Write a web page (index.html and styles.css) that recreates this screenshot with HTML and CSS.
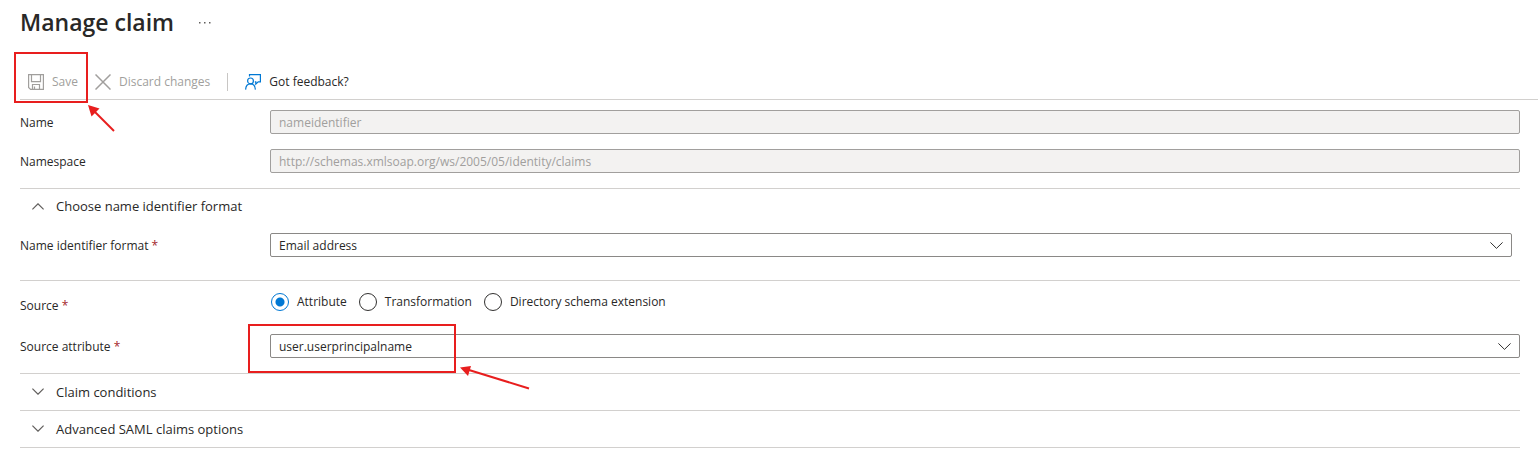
FILE: index.html
```html
<!DOCTYPE html>
<html lang="en">
<head>
    <meta charset="UTF-8">
    <meta name="viewport" content="width=device-width, initial-scale=1.0">
    <title>Manage claim</title>
    <link rel="stylesheet" href="styles.css">
</head>
<body>
    <header class="header">
        <h1>Manage claim</h1>
        <button type="button" class="more" aria-label="More actions">
            <svg width="14" height="4" viewBox="0 0 14 4" fill="#605e5c"><rect x="0" y="2" width="1.5" height="1.5"/><rect x="5" y="2" width="1.5" height="1.5"/><rect x="10" y="2" width="1.5" height="1.5"/></svg>
        </button>
    </header>

    <div class="toolbar">
        <div class="marked">
            <button type="button" class="command" disabled>
                <svg width="16" height="16" viewBox="0 0 16 16" fill="none" stroke="currentColor" stroke-width="1.200"><path d="M.6.6h14.800v14.800H2.600l-2-2z"/><path d="M3.500.6v7h9v-7M4.500 15.400v-4.900h7v4.900M6.500 12.500v3"/></svg>
                Save
            </button>
            <div class="highlight highlight-save"></div>
            <svg class="arrow arrow-save" width="28" height="28" viewBox="0 0 28 28"><path d="M26 26L7 7" stroke="#e81e1e" stroke-width="2"/><path d="M0 0l11.500 3.500-8 8z" fill="#e81e1e"/></svg>
        </div>
        <button type="button" class="command" disabled>
            <svg width="16" height="16" viewBox="0 0 16 16" fill="none" stroke="currentColor" stroke-width="1.500"><path d="M.5.5l15 15M15.500.5l-15 15"/></svg>
            Discard changes
        </button>
        <span class="divider"></span>
        <button type="button" class="command">
            <svg width="16" height="16" viewBox="0 0 16 16" fill="none" stroke="#0078d4" stroke-width="1.200"><path d="M4.500 2.500V.6h10.900v7.300h-2.200l-2.400 2.300V7.900H9.800"/><circle cx="5.500" cy="6.900" r="2.900"/><path d="M.6 15.600c.2-3.600 2.200-5.800 4.900-5.800s4.700 2.200 4.900 5.800"/></svg>
            Got feedback?
        </button>
    </div>

    <form class="form">
        <section class="section">
            <div class="row">
                <label class="label" for="name">Name</label>
                <input type="text" class="field" id="name" value="nameidentifier" disabled>
            </div>
            <div class="row">
                <label class="label" for="namespace">Namespace</label>
                <input type="text" class="field" id="namespace" value="http://schemas.xmlsoap.org/ws/2005/05/identity/claims" disabled>
            </div>
        </section>

        <section class="section section-format">
            <button type="button" class="accordion" aria-expanded="true">
                <svg width="12" height="7" viewBox="0 0 12 7" fill="none" stroke="#605e5c" stroke-width="1.200"><path d="M.4 6.400L6 .8l5.600 5.600"/></svg>
                Choose name identifier format
            </button>
            <div class="row row-inset">
                <label class="label" for="format">Name identifier format <span class="required">*</span></label>
                <div class="select">
                    <select class="field" id="format">
                        <option>Email address</option>
                    </select>
                    <svg class="chevron" width="13" height="7" viewBox="0 0 13 7" fill="none" stroke="#323130"><path d="M.4.4l6.100 6L12.600.4"/></svg>
                </div>
            </div>
        </section>

        <section class="section section-source">
            <div class="row" role="radiogroup" aria-labelledby="source-label">
                <span class="label source-label" id="source-label">Source <span class="required">*</span></span>
                <div class="radios">
                    <label class="radio"><input type="radio" name="source" checked>Attribute</label>
                    <label class="radio"><input type="radio" name="source">Transformation</label>
                    <label class="radio"><input type="radio" name="source">Directory schema extension</label>
                </div>
            </div>
            <div class="row">
                <label class="label" for="attribute">Source attribute <span class="required">*</span></label>
                <div class="select">
                    <select class="field" id="attribute">
                        <option>user.userprincipalname</option>
                    </select>
                    <svg class="chevron" width="13" height="7" viewBox="0 0 13 7" fill="none" stroke="#323130"><path d="M.4.4l6.100 6L12.600.4"/></svg>
                    <div class="highlight highlight-attribute"></div>
                    <svg class="arrow arrow-attribute" width="70" height="26" viewBox="0 0 70 26"><path d="M69 22.500L9 4" stroke="#e81e1e" stroke-width="2"/><path d="M0 1.500L11 0 8 10z" fill="#e81e1e"/></svg>
                </div>
            </div>
        </section>

        <button type="button" class="accordion accordion-closed" aria-expanded="false">
            <svg width="12" height="7" viewBox="0 0 12 7" fill="none" stroke="#605e5c" stroke-width="1.200"><path d="M.4.600L6 6.200 11.600.600"/></svg>
            Claim conditions
        </button>
        <button type="button" class="accordion accordion-closed" aria-expanded="false">
            <svg width="12" height="7" viewBox="0 0 12 7" fill="none" stroke="#605e5c" stroke-width="1.200"><path d="M.4.600L6 6.200 11.600.600"/></svg>
            Advanced SAML claims options
        </button>
    </form>
</body>
</html>
```
FILE: styles.css
```css
* {
    box-sizing: border-box;
}
body {
    margin: 0;
    background: #fff;
    color: #292827;
    font-family: "Open Sans", "Noto Sans", sans-serif;
    font-size: 12px;
    line-height: 16px;
}
button,
input,
select {
    font: inherit;
    color: inherit;
}
button {
    padding: 0;
    border: none;
    background: none;
}
svg {
    display: block;
    flex: none;
}

/* Header and toolbar */
.header {
    display: flex;
    align-items: center;
    gap: 25px;
    height: 46px;
    padding: 0 20px 2px;
}
h1 {
    margin: 0;
    font-size: 23px;
    line-height: 32px;
    font-weight: 600;
}
.toolbar {
    display: flex;
    align-items: center;
    gap: 17px;
    height: 54px;
    padding: 18px 8px 0;
    margin-left: 20px;
    border-bottom: 1px solid #d2d0ce;
}
.command {
    display: flex;
    align-items: center;
    gap: 8px;
}
.command:disabled {
    color: #a19f9d;
}
.divider {
    width: 1px;
    height: 18px;
    background: #c8c6c4;
}
.marked {
    position: relative;
}

/* Form */
.form {
    padding: 0 18px 0 20px;
}
.section {
    display: grid;
    gap: 15px;
    padding: 10px 0 15px;
    border-bottom: 1px solid #d2d0ce;
}
.section-format {
    gap: 9px;
    padding: 0 0 23px;
}
.section-source {
    gap: 20px;
    padding-top: 9px;
}
.row {
    display: grid;
    grid-template-columns: 250px 1fr;
    align-items: center;
}
.row-inset {
    padding-right: 8px;
}
.label {
    padding-top: 2px;
}
.required {
    color: #a4262c;
}
.field {
    display: block;
    width: 100%;
    height: 24px;
    padding: 1px 8px 0;
    border: 1px solid #8a8886;
    border-radius: 2px;
    background: #fff;
    appearance: none;
}
.field:disabled {
    border-color: #a19f9d;
    background: #f3f2f1;
    color: #a19f9d;
    opacity: 1;
}
.select {
    position: relative;
}
.chevron {
    position: absolute;
    top: 9px;
    right: 9px;
    pointer-events: none;
}
.source-label {
    padding-top: 8px;
}
.radios {
    display: flex;
    gap: 11px;
}
.radio {
    display: flex;
    align-items: center;
    gap: 8px;
}
.radio input {
    width: 18px;
    height: 18px;
    margin: 0 0 0 1px;
    border: 1px solid #323130;
    border-radius: 50%;
    appearance: none;
}
.radio input:checked {
    border-color: #0078d4;
    background: radial-gradient(circle, #0078d4 4px, #fff 5px);
}
.accordion {
    display: flex;
    align-items: center;
    gap: 12px;
    width: 100%;
    height: 35px;
    padding: 0 12px 1px;
    font-size: 13px;
}
.accordion-closed {
    height: 37px;
    border-bottom: 1px solid #d2d0ce;
}

/* Callouts */
.highlight {
    position: absolute;
    border: 2px solid #e81e1e;
    pointer-events: none;
}
.highlight-save {
    top: -22px;
    left: -14px;
    width: 74px;
    height: 51px;
}
.highlight-attribute {
    top: -10px;
    left: -22px;
    width: 208px;
    height: 49px;
}
.arrow {
    position: absolute;
    pointer-events: none;
}
.arrow-save {
    top: 31px;
    left: 60px;
}
.arrow-attribute {
    top: 32px;
    left: 190px;
}
```
